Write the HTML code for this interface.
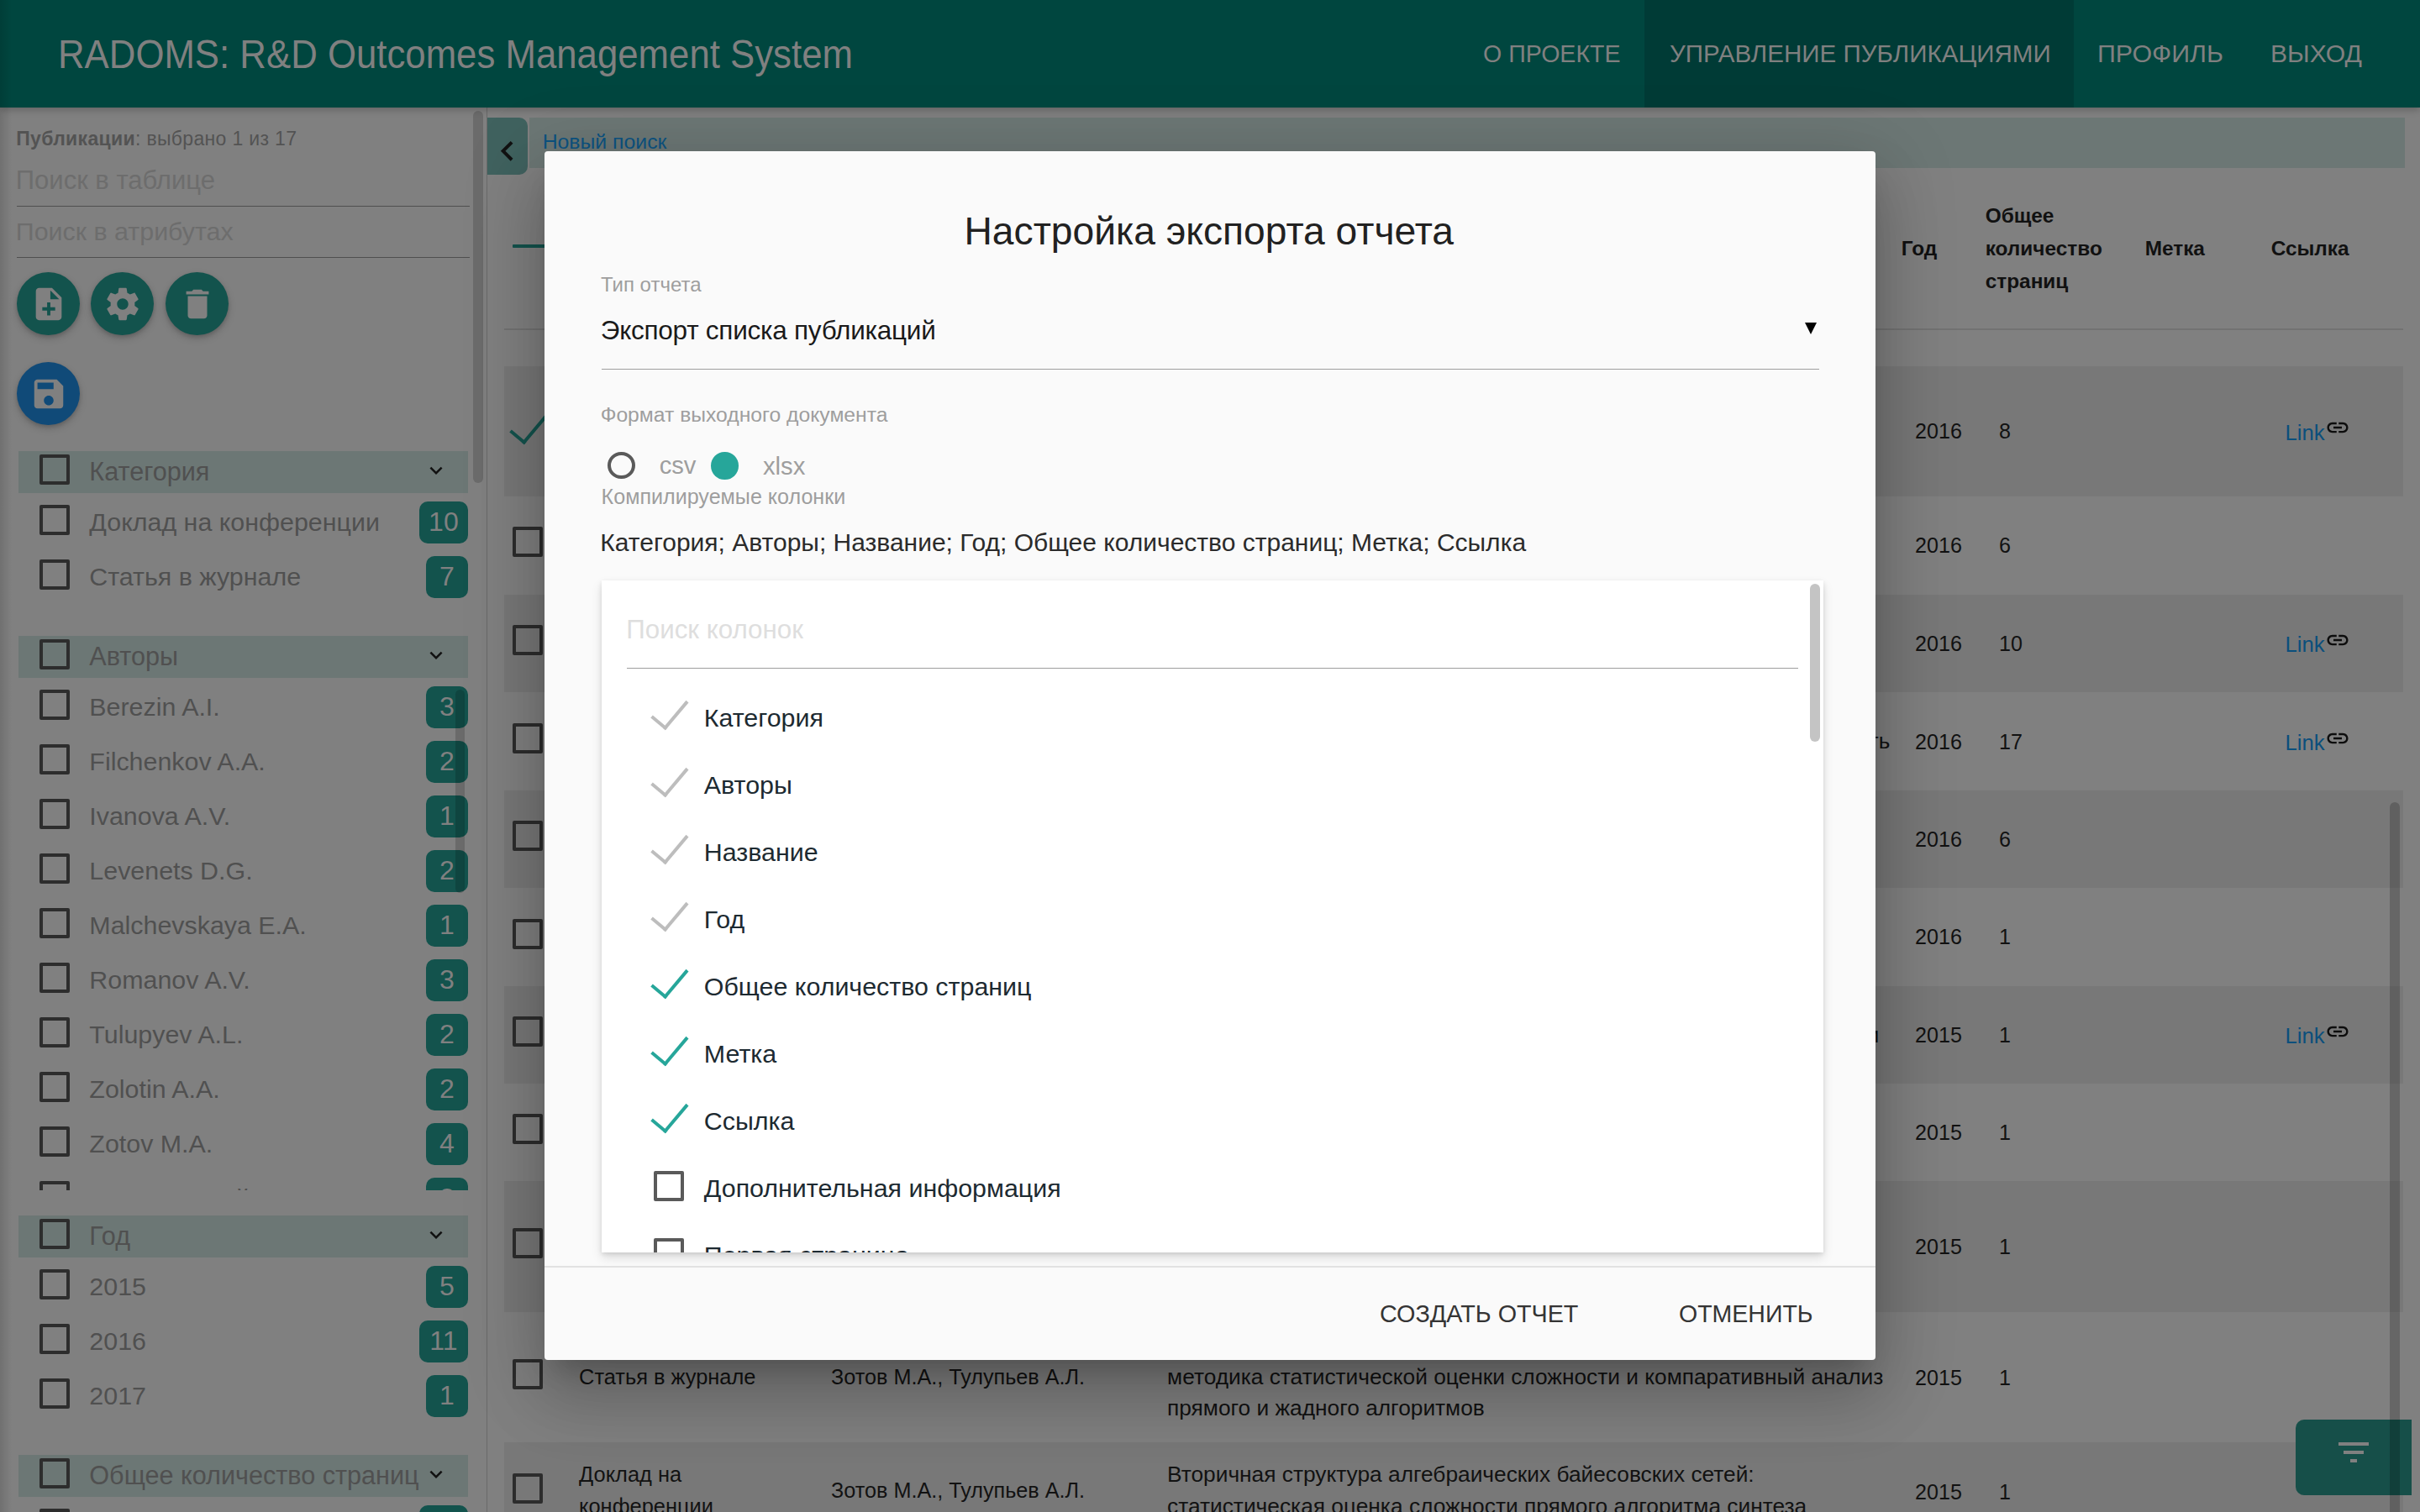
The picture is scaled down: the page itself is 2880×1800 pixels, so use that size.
<!DOCTYPE html><html><head><meta charset="utf-8"><style>
html,body{margin:0;padding:0}
body{width:2880px;height:1800px;overflow:hidden;position:relative;background:#808080;font-family:"Liberation Sans",sans-serif}
.t{position:absolute;white-space:nowrap}
.r{position:absolute}
.cb{position:absolute;box-sizing:border-box;width:36px;height:36px;border:4px solid #2d2d2d;border-radius:2px}
.badge{position:absolute;height:50px;border-radius:10px;background:#13534d;color:#808080;font-size:32px;line-height:48px;text-align:center}
.fab{position:absolute;width:75px;height:75px;border-radius:50%;box-shadow:0 4px 10px rgba(0,0,0,0.18),0 2px 4px rgba(0,0,0,0.12)}
.chk{position:absolute;box-sizing:border-box;width:22.5px;height:43px;border-right:4px solid;border-bottom:4px solid;transform:rotate(40deg);transform-origin:100% 100%}
</style></head><body>

<div class="r" style="left:0.00px;top:0.00px;width:14.00px;height:1800.00px;background:linear-gradient(to right, rgba(0,0,0,0.12), rgba(0,0,0,0));z-index:5"></div>
<div class="r" style="left:0.00px;top:0.00px;width:2880.00px;height:128.00px;background:#00463f;box-shadow:0 3px 8px rgba(0,0,0,0.22);z-index:3"></div>
<div class="r" style="left:0;top:0;width:2880px;height:128px;z-index:4">
<div class="r" style="left:1957.00px;top:0.00px;width:511.00px;height:128.00px;background:#003b36;"></div>
<div class="t " style="left:69.30px;top:40.50px;font-size:48px;line-height:48px;color:#808080;transform:scaleX(0.9116);transform-origin:0 0;">RADOMS: R&amp;D Outcomes Management System</div>
<div class="t " style="left:1765.00px;top:48.75px;font-size:30px;line-height:30px;color:#808080;transform:scaleX(0.9525);transform-origin:0 0;">О ПРОЕКТЕ</div>
<div class="t " style="left:1987.00px;top:48.75px;font-size:30px;line-height:30px;color:#808080;transform:scaleX(0.985);transform-origin:0 0;">УПРАВЛЕНИЕ ПУБЛИКАЦИЯМИ</div>
<div class="t " style="left:2496.00px;top:48.75px;font-size:30px;line-height:30px;color:#808080;transform:scaleX(1.013);transform-origin:0 0;">ПРОФИЛЬ</div>
<div class="t " style="left:2702.00px;top:48.75px;font-size:30px;line-height:30px;color:#808080;transform:scaleX(1.004);transform-origin:0 0;">ВЫХОД</div>
</div>
<div class="t " style="left:19.23px;top:153.50px;font-size:23px;line-height:23px;color:#535353;letter-spacing:0.33px;"><b>Публикации</b>: выбрано 1 из 17</div>
<div class="t " style="left:18.80px;top:199.00px;font-size:31px;line-height:31px;color:#6d6d6d;">Поиск в таблице</div>
<div class="r" style="left:20.00px;top:244.75px;width:539.00px;height:1.50px;background:#4f4f4f;"></div>
<div class="t " style="left:18.83px;top:259.75px;font-size:30.4px;line-height:30.4px;color:#6d6d6d;">Поиск в атрибутах</div>
<div class="r" style="left:20.00px;top:305.75px;width:539.00px;height:1.50px;background:#4f4f4f;"></div>
<div class="fab" style="left:20px;top:324px;background:#13534d"></div>
<svg class="r" style="left:34.50px;top:338.50px" width="46" height="46" viewBox="0 0 24 24"><path fill="#808080" d="M14 2H6c-1.1 0-1.99.9-1.99 2L4 20c0 1.1.89 2 1.99 2H18c1.1 0 2-.9 2-2V8l-6-6zm2 14h-3v3h-2v-3H8v-2h3v-3h2v3h3v2zm-3-7V3.5L18.5 9H13z"/></svg>
<div class="fab" style="left:108px;top:324px;background:#13534d"></div>
<svg class="r" style="left:122.50px;top:338.50px" width="46" height="46" viewBox="0 0 24 24"><path fill="#808080" d="M19.43 12.98c.04-.32.07-.64.07-.98s-.03-.66-.07-.98l2.11-1.65c.19-.15.24-.42.12-.64l-2-3.46c-.12-.22-.39-.3-.61-.22l-2.49 1c-.52-.4-1.08-.73-1.69-.98l-.38-2.65C14.46 2.18 14.25 2 14 2h-4c-.25 0-.46.18-.49.42l-.38 2.650c-.61.25-1.17.59-1.69.98l-2.49-1c-.23-.09-.49 0-.61.22l-2 3.46c-.13.22-.07.49.12.64l2.11 1.65c-.04.32-.07.65-.07.98s.03.66.07.98l-2.11 1.65c-.19.15-.24.42-.12.64l2 3.46c.12.22.39.3.61.22l2.49-1c.52.4 1.08.73 1.69.98l.38 2.65c.03.24.24.42.49.42h4c.25 0 .46-.18.49-.42l.38-2.65c.61-.25 1.170-.59 1.69-.98l2.49 1c.23.09.49 0 .61-.22l2-3.46c.12-.22.07-.49-.12-.64l-2.11-1.65zM12 15.5c-1.93 0-3.5-1.57-3.5-3.5s1.57-3.5 3.5-3.5 3.5 1.57 3.5 3.5-1.57 3.5-3.5 3.5z"/></svg>
<div class="fab" style="left:197px;top:324px;background:#13534d"></div>
<svg class="r" style="left:211.50px;top:338.50px" width="46" height="46" viewBox="0 0 24 24"><path fill="#808080" d="M6 19c0 1.1.9 2 2 2h8c1.1 0 2-.9 2-2V7H6v12zM19 4h-3.5l-1-1h-5l-1 1H5v2h14V4z"/></svg>
<div class="fab" style="left:20px;top:431px;background:#104a78"></div>
<svg class="r" style="left:34.50px;top:445.50px" width="46" height="46" viewBox="0 0 24 24"><path fill="#808080" d="M17 3H5c-1.11 0-2 .9-2 2v14c0 1.1.89 2 2 2h14c1.1 0 2-.9 2-2V7l-4-4zm-5 16c-1.66 0-3-1.34-3-3s1.34-3 3-3 3 1.34 3 3-1.34 3-3 3zm3-10H5V5h10v4z"/></svg>
<div class="r" style="left:22.00px;top:537.00px;width:535.00px;height:50.00px;background:#6c7775;"></div>
<div class="cb" style="left:47px;top:540.75px"></div>
<div class="t " style="left:106.32px;top:546.00px;font-size:30.6px;line-height:30.6px;color:#505050;">Категория</div>
<svg class="r" style="left:503.50px;top:544.80px" width="30" height="30" viewBox="0 0 24 24"><path fill="#111111" d="M7.41 8.59L12 13.17l4.59-4.58L18 10l-6 6-6-6 1.41-1.41z"/></svg>
<div class="cb" style="left:47px;top:600.75px"></div>
<div class="t " style="left:106.33px;top:606.00px;font-size:30.4px;line-height:30.4px;color:#505050;">Доклад на конференции</div>
<div class="badge" style="left:498.75px;top:597px;width:58.25px">10</div>
<div class="cb" style="left:47px;top:665.75px"></div>
<div class="t " style="left:106.33px;top:671.00px;font-size:30.4px;line-height:30.4px;color:#505050;">Статья в журнале</div>
<div class="badge" style="left:507px;top:662px;width:50px">7</div>
<div class="r" style="left:22.00px;top:756.75px;width:535.00px;height:50.00px;background:#6c7775;"></div>
<div class="cb" style="left:47px;top:760.5px"></div>
<div class="t " style="left:106.32px;top:765.75px;font-size:30.6px;line-height:30.6px;color:#505050;">Авторы</div>
<svg class="r" style="left:503.50px;top:764.55px" width="30" height="30" viewBox="0 0 24 24"><path fill="#111111" d="M7.41 8.59L12 13.17l4.59-4.58L18 10l-6 6-6-6 1.41-1.41z"/></svg>
<div class="r" style="left:0;top:809.5px;width:580px;height:607.25px;overflow:hidden">
<div class="r" style="left:0;top:-809.5px;width:580px;height:1800px">
<div class="cb" style="left:47px;top:820.75px"></div>
<div class="t " style="left:106.33px;top:826.00px;font-size:30.4px;line-height:30.4px;color:#505050;">Berezin A.I.</div>
<div class="badge" style="left:507px;top:817px;width:50px">3</div>
<div class="cb" style="left:47px;top:885.75px"></div>
<div class="t " style="left:106.33px;top:891.00px;font-size:30.4px;line-height:30.4px;color:#505050;">Filchenkov A.A.</div>
<div class="badge" style="left:507px;top:882px;width:50px">2</div>
<div class="cb" style="left:47px;top:950.75px"></div>
<div class="t " style="left:106.33px;top:956.00px;font-size:30.4px;line-height:30.4px;color:#505050;">Ivanova A.V.</div>
<div class="badge" style="left:507px;top:947px;width:50px">1</div>
<div class="cb" style="left:47px;top:1015.75px"></div>
<div class="t " style="left:106.33px;top:1021.00px;font-size:30.4px;line-height:30.4px;color:#505050;">Levenets D.G.</div>
<div class="badge" style="left:507px;top:1012px;width:50px">2</div>
<div class="cb" style="left:47px;top:1080.75px"></div>
<div class="t " style="left:106.33px;top:1086.00px;font-size:30.4px;line-height:30.4px;color:#505050;">Malchevskaya E.A.</div>
<div class="badge" style="left:507px;top:1077px;width:50px">1</div>
<div class="cb" style="left:47px;top:1145.75px"></div>
<div class="t " style="left:106.33px;top:1151.00px;font-size:30.4px;line-height:30.4px;color:#505050;">Romanov A.V.</div>
<div class="badge" style="left:507px;top:1142px;width:50px">3</div>
<div class="cb" style="left:47px;top:1210.75px"></div>
<div class="t " style="left:106.33px;top:1216.00px;font-size:30.4px;line-height:30.4px;color:#505050;">Tulupyev A.L.</div>
<div class="badge" style="left:507px;top:1207px;width:50px">2</div>
<div class="cb" style="left:47px;top:1275.75px"></div>
<div class="t " style="left:106.33px;top:1281.00px;font-size:30.4px;line-height:30.4px;color:#505050;">Zolotin A.A.</div>
<div class="badge" style="left:507px;top:1272px;width:50px">2</div>
<div class="cb" style="left:47px;top:1340.75px"></div>
<div class="t " style="left:106.33px;top:1346.00px;font-size:30.4px;line-height:30.4px;color:#505050;">Zotov M.A.</div>
<div class="badge" style="left:507px;top:1337px;width:50px">4</div>
<div class="cb" style="left:47px;top:1405.75px"></div>
<div class="t " style="left:106.33px;top:1411.00px;font-size:30.4px;line-height:30.4px;color:#505050;">Бессмертный И.А.</div>
<div class="badge" style="left:507px;top:1402px;width:50px">2</div>
</div></div>
<div class="r" style="left:541.50px;top:821.00px;width:11.50px;height:242.00px;background:rgba(0,0,0,0.17);border-radius:6px"></div>
<div class="r" style="left:22.00px;top:1446.75px;width:535.00px;height:50.00px;background:#6c7775;"></div>
<div class="cb" style="left:47px;top:1450.5px"></div>
<div class="t " style="left:106.32px;top:1455.75px;font-size:30.6px;line-height:30.6px;color:#505050;">Год</div>
<svg class="r" style="left:503.50px;top:1454.55px" width="30" height="30" viewBox="0 0 24 24"><path fill="#111111" d="M7.41 8.59L12 13.17l4.59-4.58L18 10l-6 6-6-6 1.41-1.41z"/></svg>
<div class="cb" style="left:47px;top:1510.75px"></div>
<div class="t " style="left:106.33px;top:1516.00px;font-size:30.4px;line-height:30.4px;color:#505050;">2015</div>
<div class="badge" style="left:507px;top:1507px;width:50px">5</div>
<div class="cb" style="left:47px;top:1575.75px"></div>
<div class="t " style="left:106.33px;top:1581.00px;font-size:30.4px;line-height:30.4px;color:#505050;">2016</div>
<div class="badge" style="left:498.75px;top:1572px;width:58.25px">11</div>
<div class="cb" style="left:47px;top:1640.75px"></div>
<div class="t " style="left:106.33px;top:1646.00px;font-size:30.4px;line-height:30.4px;color:#505050;">2017</div>
<div class="badge" style="left:507px;top:1637px;width:50px">1</div>
<div class="r" style="left:22.00px;top:1731.75px;width:535.00px;height:50.00px;background:#6c7775;"></div>
<div class="cb" style="left:47px;top:1735.5px"></div>
<div class="t " style="left:106.32px;top:1740.75px;font-size:30.6px;line-height:30.6px;color:#505050;">Общее количество страниц</div>
<svg class="r" style="left:503.50px;top:1739.55px" width="30" height="30" viewBox="0 0 24 24"><path fill="#111111" d="M7.41 8.59L12 13.17l4.59-4.58L18 10l-6 6-6-6 1.41-1.41z"/></svg>
<div class="cb" style="left:47px;top:1795.75px"></div>
<div class="t " style="left:106.33px;top:1801.00px;font-size:30.4px;line-height:30.4px;color:#505050;">1</div>
<div class="badge" style="left:498.75px;top:1792px;width:58.25px">13</div>
<div class="r" style="left:563.00px;top:132.00px;width:12.00px;height:443.00px;background:#6b6b6b;border-radius:6px"></div>
<div class="r" style="left:578.75px;top:128.00px;width:1.25px;height:1672.00px;background:#6a6a6a;"></div>
<div class="r" style="left:580.00px;top:140.00px;width:48.00px;height:67.50px;background:#40625f;border-radius:0 10px 10px 0"></div>
<svg class="r" style="left:580.20px;top:155.60px" width="47.5" height="47.5" viewBox="0 0 24 24"><path fill="#111111" d="M15.41 7.41L14 6l-6 6 6 6 1.41-1.41L10.83 12z"/></svg>
<div class="r" style="left:630.00px;top:140.00px;width:2232.00px;height:60.00px;background:#6c7775;"></div>
<div class="t " style="left:645.64px;top:157.00px;font-size:24.8px;line-height:24.8px;color:#0d5381;">Новый поиск</div>
<div class="r" style="left:610.00px;top:290.50px;width:44.00px;height:4.00px;background:#13534d;border-radius:1px"></div>
<div class="t " style="left:2262.66px;top:283.75px;font-size:24.4px;line-height:24.4px;color:#111;font-weight:700;">Год</div>
<div class="t " style="left:2362.66px;top:245.00px;font-size:24.4px;line-height:24.4px;color:#111;font-weight:700;">Общее</div>
<div class="t " style="left:2362.66px;top:283.75px;font-size:24.4px;line-height:24.4px;color:#111;font-weight:700;">количество</div>
<div class="t " style="left:2362.66px;top:322.50px;font-size:24.4px;line-height:24.4px;color:#111;font-weight:700;">страниц</div>
<div class="t " style="left:2552.66px;top:283.75px;font-size:24.4px;line-height:24.4px;color:#111;font-weight:700;">Метка</div>
<div class="t " style="left:2702.66px;top:283.75px;font-size:24.4px;line-height:24.4px;color:#111;font-weight:700;">Ссылка</div>
<div class="r" style="left:600.00px;top:391.00px;width:2260.00px;height:1.50px;background:#727272;"></div>
<div class="r" style="left:600.00px;top:435.50px;width:2260.00px;height:155.25px;background:#787878;"></div>
<div class="chk" style="left:601.25px;top:485.52px;border-color:#13534d"></div>
<div class="t " style="left:2279.12px;top:501.12px;font-size:25.1px;line-height:25.1px;color:#121212;">2016</div>
<div class="t " style="left:2379.12px;top:501.12px;font-size:25.1px;line-height:25.1px;color:#121212;">8</div>
<div class="t " style="left:2719.59px;top:502.62px;font-size:25.7px;line-height:25.7px;color:#0b4f7c;">Link</div>
<svg class="r" style="left:2767.00px;top:494.12px" width="30" height="30" viewBox="0 0 24 24"><path fill="#0d0d0d" d="M3.9 12c0-1.71 1.39-3.1 3.1-3.1h4V7H7c-2.76 0-5 2.240-5 5s2.24 5 5 5h4v-1.9H7c-1.71 0-3.1-1.39-3.1-3.1zM8 13h8v-2H8v2zm9-6h-4v1.9h4c1.71 0 3.1 1.39 3.1 3.1s-1.39 3.1-3.1 3.1h-4V17h4c2.76 0 5-2.24 5-5s-2.24-5-5-5z"/></svg>
<div class="cb" style="left:610px;top:627.38px"></div>
<div class="t " style="left:2279.12px;top:637.12px;font-size:25.1px;line-height:25.1px;color:#121212;">2016</div>
<div class="t " style="left:2379.12px;top:637.12px;font-size:25.1px;line-height:25.1px;color:#121212;">6</div>
<div class="r" style="left:600.00px;top:707.50px;width:2260.00px;height:116.25px;background:#787878;"></div>
<div class="cb" style="left:610px;top:743.88px"></div>
<div class="t " style="left:2279.12px;top:753.62px;font-size:25.1px;line-height:25.1px;color:#121212;">2016</div>
<div class="t " style="left:2379.12px;top:753.62px;font-size:25.1px;line-height:25.1px;color:#121212;">10</div>
<div class="t " style="left:2719.59px;top:755.12px;font-size:25.7px;line-height:25.7px;color:#0b4f7c;">Link</div>
<svg class="r" style="left:2767.00px;top:746.62px" width="30" height="30" viewBox="0 0 24 24"><path fill="#0d0d0d" d="M3.9 12c0-1.71 1.39-3.1 3.1-3.1h4V7H7c-2.76 0-5 2.240-5 5s2.24 5 5 5h4v-1.9H7c-1.71 0-3.1-1.39-3.1-3.1zM8 13h8v-2H8v2zm9-6h-4v1.9h4c1.71 0 3.1 1.39 3.1 3.1s-1.39 3.1-3.1 3.1h-4V17h4c2.76 0 5-2.24 5-5s-2.24-5-5-5z"/></svg>
<div class="cb" style="left:610px;top:860.75px"></div>
<div class="t " style="left:2279.12px;top:870.50px;font-size:25.1px;line-height:25.1px;color:#121212;">2016</div>
<div class="t " style="left:2379.12px;top:870.50px;font-size:25.1px;line-height:25.1px;color:#121212;">17</div>
<div class="t " style="left:2719.59px;top:872.00px;font-size:25.7px;line-height:25.7px;color:#0b4f7c;">Link</div>
<svg class="r" style="left:2767.00px;top:863.50px" width="30" height="30" viewBox="0 0 24 24"><path fill="#0d0d0d" d="M3.9 12c0-1.71 1.39-3.1 3.1-3.1h4V7H7c-2.76 0-5 2.240-5 5s2.24 5 5 5h4v-1.9H7c-1.71 0-3.1-1.39-3.1-3.1zM8 13h8v-2H8v2zm9-6h-4v1.9h4c1.71 0 3.1 1.39 3.1 3.1s-1.39 3.1-3.1 3.1h-4V17h4c2.76 0 5-2.24 5-5s-2.24-5-5-5z"/></svg>
<div class="r" style="left:600.00px;top:941.25px;width:2260.00px;height:115.50px;background:#787878;"></div>
<div class="cb" style="left:610px;top:977.25px"></div>
<div class="t " style="left:2279.12px;top:987.00px;font-size:25.1px;line-height:25.1px;color:#121212;">2016</div>
<div class="t " style="left:2379.12px;top:987.00px;font-size:25.1px;line-height:25.1px;color:#121212;">6</div>
<div class="cb" style="left:610px;top:1093.50px"></div>
<div class="t " style="left:2279.12px;top:1103.25px;font-size:25.1px;line-height:25.1px;color:#121212;">2016</div>
<div class="t " style="left:2379.12px;top:1103.25px;font-size:25.1px;line-height:25.1px;color:#121212;">1</div>
<div class="r" style="left:600.00px;top:1173.75px;width:2260.00px;height:116.25px;background:#787878;"></div>
<div class="cb" style="left:610px;top:1210.12px"></div>
<div class="t " style="left:2279.12px;top:1219.88px;font-size:25.1px;line-height:25.1px;color:#121212;">2015</div>
<div class="t " style="left:2379.12px;top:1219.88px;font-size:25.1px;line-height:25.1px;color:#121212;">1</div>
<div class="t " style="left:2719.59px;top:1221.38px;font-size:25.7px;line-height:25.7px;color:#0b4f7c;">Link</div>
<svg class="r" style="left:2767.00px;top:1212.88px" width="30" height="30" viewBox="0 0 24 24"><path fill="#0d0d0d" d="M3.9 12c0-1.71 1.39-3.1 3.1-3.1h4V7H7c-2.76 0-5 2.240-5 5s2.24 5 5 5h4v-1.9H7c-1.71 0-3.1-1.39-3.1-3.1zM8 13h8v-2H8v2zm9-6h-4v1.9h4c1.71 0 3.1 1.39 3.1 3.1s-1.39 3.1-3.1 3.1h-4V17h4c2.76 0 5-2.24 5-5s-2.24-5-5-5z"/></svg>
<div class="cb" style="left:610px;top:1326.38px"></div>
<div class="t " style="left:2279.12px;top:1336.12px;font-size:25.1px;line-height:25.1px;color:#121212;">2015</div>
<div class="t " style="left:2379.12px;top:1336.12px;font-size:25.1px;line-height:25.1px;color:#121212;">1</div>
<div class="r" style="left:600.00px;top:1406.25px;width:2260.00px;height:155.75px;background:#787878;"></div>
<div class="cb" style="left:610px;top:1462.38px"></div>
<div class="t " style="left:2279.12px;top:1472.12px;font-size:25.1px;line-height:25.1px;color:#121212;">2015</div>
<div class="t " style="left:2379.12px;top:1472.12px;font-size:25.1px;line-height:25.1px;color:#121212;">1</div>
<div class="cb" style="left:610px;top:1617.75px"></div>
<div class="t " style="left:2279.12px;top:1627.50px;font-size:25.1px;line-height:25.1px;color:#121212;">2015</div>
<div class="t " style="left:2379.12px;top:1627.50px;font-size:25.1px;line-height:25.1px;color:#121212;">1</div>
<div class="r" style="left:600.00px;top:1717.00px;width:2260.00px;height:117.00px;background:#787878;"></div>
<div class="cb" style="left:610px;top:1753.75px"></div>
<div class="t " style="left:2279.12px;top:1763.50px;font-size:25.1px;line-height:25.1px;color:#121212;">2015</div>
<div class="t " style="left:2379.12px;top:1763.50px;font-size:25.1px;line-height:25.1px;color:#121212;">1</div>
<div class="t " style="left:2200.57px;top:868.80px;font-size:26px;line-height:26px;color:#121212;width:48.7px;text-align:right">сть</div>
<div class="t " style="left:2198.57px;top:1218.70px;font-size:26px;line-height:26px;color:#121212;width:37.6px;text-align:right">ми</div>
<div class="t " style="left:689.10px;top:1627.00px;font-size:25.4px;line-height:25.4px;color:#121212;">Статья в журнале</div>
<div class="t " style="left:989.11px;top:1627.00px;font-size:25.2px;line-height:25.2px;color:#121212;">Зотов М.А., Тулупьев А.Л.</div>
<div class="t " style="left:1389.05px;top:1589.00px;font-size:26.3px;line-height:26.3px;color:#121212;">Метод синтеза вторичной структуры алгебраической байесовской</div>
<div class="t " style="left:1389.05px;top:1626.00px;font-size:26.3px;line-height:26.3px;color:#121212;">методика статистической оценки сложности и компаративный анализ</div>
<div class="t " style="left:1389.05px;top:1663.00px;font-size:26.3px;line-height:26.3px;color:#121212;">прямого и жадного алгоритмов</div>
<div class="t " style="left:689.10px;top:1742.75px;font-size:25.4px;line-height:25.4px;color:#121212;">Доклад на</div>
<div class="t " style="left:689.10px;top:1781.00px;font-size:25.4px;line-height:25.4px;color:#121212;">конференции</div>
<div class="t " style="left:989.11px;top:1761.50px;font-size:25.2px;line-height:25.2px;color:#121212;">Зотов М.А., Тулупьев А.Л.</div>
<div class="t " style="left:1389.05px;top:1741.75px;font-size:26.3px;line-height:26.3px;color:#121212;">Вторичная структура алгебраических байесовских сетей:</div>
<div class="t " style="left:1389.05px;top:1780.00px;font-size:26.3px;line-height:26.3px;color:#121212;">статистическая оценка сложности прямого алгоритма синтеза</div>
<div class="r" style="left:2732.00px;top:1690.00px;width:138.00px;height:90.00px;background:#164f49;border-radius:10px 0 0 10px"></div>
<svg class="r" style="left:2777.00px;top:1705.00px" width="48" height="48" viewBox="0 0 24 24"><path fill="#808080" d="M10 18h4v-2h-4v2zM3 6v2h18V6H3zm3 7h12v-2H6v2z"/></svg>
<div class="r" style="left:2844.00px;top:955.00px;width:12.00px;height:875.00px;background:rgba(0,0,0,0.2);border-radius:6px"></div>
<div class="r" style="left:648px;top:180px;width:1584px;height:1439.4px;background:#fafafa;border-radius:4px;box-shadow:0 48px 76px 6px rgba(0,0,0,0.14),0 18px 92px 16px rgba(0,0,0,0.12),0 22px 30px -14px rgba(0,0,0,0.2);z-index:10;overflow:hidden">
<div class="r" style="left:-648px;top:-180px;width:2880px;height:1800px">
<div class="t " style="left:1147.50px;top:251.80px;font-size:46.2px;line-height:46.2px;color:#212121;">Настройка экспорта отчета</div>
<div class="t " style="left:714.93px;top:327.00px;font-size:24px;line-height:24px;color:#9e9e9e;">Тип отчета</div>
<div class="t " style="left:714.77px;top:378.25px;font-size:31.5px;line-height:31.5px;color:#1a1a1a;letter-spacing:-0.25px;">Экспорт списка публикаций</div>
<div class="r" style="left:2148px;top:383.5px;width:0;height:0;border-left:7.2px solid transparent;border-right:7.2px solid transparent;border-top:14.3px solid #000"></div>
<div class="r" style="left:716.00px;top:438.75px;width:1448.50px;height:1.50px;background:#9e9e9e;"></div>
<div class="t " style="left:714.64px;top:482.25px;font-size:24.7px;line-height:24.7px;color:#9e9e9e;">Формат выходного документа</div>
<div class="r" style="left:723.25px;top:538px;width:32.25px;height:32px;box-sizing:border-box;border:4px solid #5a5a5a;border-radius:50%"></div>
<div class="t " style="left:784.64px;top:539.50px;font-size:29.2px;line-height:29.2px;color:#9e9e9e;">csv</div>
<div class="r" style="left:846.25px;top:538.00px;width:32.50px;height:33.00px;background:#26a69a;border-radius:50%"></div>
<div class="t " style="left:907.89px;top:539.50px;font-size:29.3px;line-height:29.3px;color:#9e9e9e;">xlsx</div>
<div class="t " style="left:715.62px;top:579.00px;font-size:25.1px;line-height:25.1px;color:#9e9e9e;">Компилируемые колонки</div>
<div class="t " style="left:714.35px;top:631.25px;font-size:30px;line-height:30px;color:#2b2b2b;">Категория; Авторы; Название; Год; Общее количество страниц; Метка; Ссылка</div>
<div class="r" style="left:716px;top:690.5px;width:1454px;height:800.5px;background:#fff;box-shadow:0 6px 12px rgba(0,0,0,0.12),0 2px 5px rgba(0,0,0,0.1);overflow:hidden">
<div class="r" style="left:-716px;top:-690.5px;width:2880px;height:1800px">
<div class="t " style="left:745.28px;top:734.00px;font-size:31.3px;line-height:31.3px;color:#dedede;">Поиск колонок</div>
<div class="r" style="left:746.00px;top:794.75px;width:1394.00px;height:1.50px;background:#9e9e9e;"></div>
<div class="r" style="left:2154.00px;top:695.00px;width:12.00px;height:188.00px;background:#c4c4c4;border-radius:6px"></div>
<div class="chk" style="left:769.30px;top:825.80px;border-color:#bdbdbd"></div>
<div class="t " style="left:837.83px;top:839.00px;font-size:30.4px;line-height:30.4px;color:#1d2a31;">Категория</div>
<div class="chk" style="left:769.30px;top:905.80px;border-color:#bdbdbd"></div>
<div class="t " style="left:837.83px;top:919.00px;font-size:30.4px;line-height:30.4px;color:#1d2a31;">Авторы</div>
<div class="chk" style="left:769.30px;top:985.80px;border-color:#bdbdbd"></div>
<div class="t " style="left:837.83px;top:999.00px;font-size:30.4px;line-height:30.4px;color:#1d2a31;">Название</div>
<div class="chk" style="left:769.30px;top:1065.80px;border-color:#bdbdbd"></div>
<div class="t " style="left:837.83px;top:1079.00px;font-size:30.4px;line-height:30.4px;color:#1d2a31;">Год</div>
<div class="chk" style="left:769.30px;top:1145.80px;border-color:#26a69a"></div>
<div class="t " style="left:837.83px;top:1159.00px;font-size:30.4px;line-height:30.4px;color:#1d2a31;">Общее количество страниц</div>
<div class="chk" style="left:769.30px;top:1225.80px;border-color:#26a69a"></div>
<div class="t " style="left:837.83px;top:1239.00px;font-size:30.4px;line-height:30.4px;color:#1d2a31;">Метка</div>
<div class="chk" style="left:769.30px;top:1305.80px;border-color:#26a69a"></div>
<div class="t " style="left:837.83px;top:1319.00px;font-size:30.4px;line-height:30.4px;color:#1d2a31;">Ссылка</div>
<div class="r" style="left:778px;top:1394.20px;width:36px;height:36px;box-sizing:border-box;border:4px solid #5a5a5a;border-radius:2px"></div>
<div class="t " style="left:837.83px;top:1399.00px;font-size:30.4px;line-height:30.4px;color:#1d2a31;">Дополнительная информация</div>
<div class="r" style="left:778px;top:1474.20px;width:36px;height:36px;box-sizing:border-box;border:4px solid #5a5a5a;border-radius:2px"></div>
<div class="t " style="left:837.83px;top:1479.00px;font-size:30.4px;line-height:30.4px;color:#1d2a31;">Первая страница</div>
</div></div>
<div class="r" style="left:648.00px;top:1507.00px;width:1584.00px;height:1.50px;background:#e2e2e2;"></div>
<div class="t " style="left:1642.00px;top:1549.00px;font-size:30px;line-height:30px;color:#343434;transform:scaleX(0.958);transform-origin:0 0;">СОЗДАТЬ ОТЧЕТ</div>
<div class="t " style="left:1998.00px;top:1549.00px;font-size:30px;line-height:30px;color:#343434;transform:scaleX(0.95);transform-origin:0 0;">ОТМЕНИТЬ</div>
</div></div>
</body></html>
